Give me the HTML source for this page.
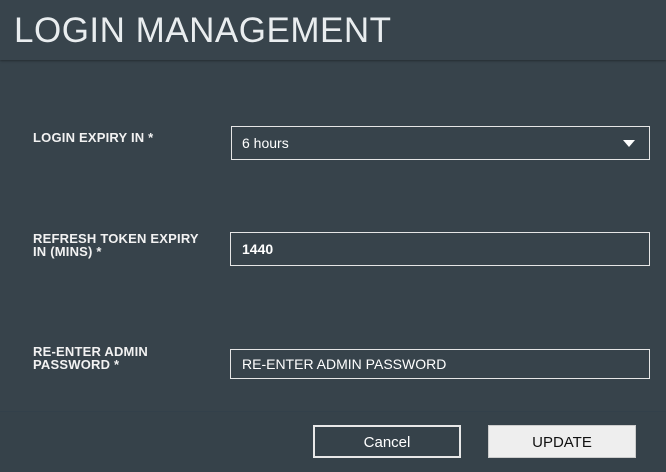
<!DOCTYPE html>
<html><head><meta charset="utf-8"><style>
*{margin:0;padding:0;box-sizing:border-box}
body{width:666px;height:472px;background:#37434b;font-family:"Liberation Sans",sans-serif;color:#fff;position:relative;overflow:hidden}
.hdr{position:absolute;left:0;top:0;width:666px;height:60px;background:#38444c;box-shadow:0 1px 2px rgba(0,0,0,.35)}
.hdr h1{position:absolute;left:14px;top:11px;font-size:35px;font-weight:normal;letter-spacing:0.5px;color:#e9edef;line-height:40px}
.lbl{position:absolute;left:33px;font-size:13px;font-weight:bold;line-height:13px;color:#f2f2f2;letter-spacing:0.2px}
.box{position:absolute;border:1px solid #e6e6e6;font-size:14px;color:#fff;padding-left:11px;display:flex;align-items:center}
.foot{position:absolute;left:0;top:411px;width:666px;height:61px;background:#36424a;border-top:1px solid #33404a}
.btn{position:absolute;top:425px;width:148px;height:33px;display:flex;align-items:center;justify-content:center;font-size:15px;line-height:33px;padding-top:1px}
</style></head><body>
<div class="hdr"><h1>LOGIN MANAGEMENT</h1></div>
<div class="lbl" style="top:131px">LOGIN EXPIRY IN *</div>
<div class="box" style="left:231px;top:126px;width:419px;height:34px;padding-left:10px">6 hours
<svg style="position:absolute;right:14px;top:13px" width="12" height="7"><path d="M0 0H12L6 7Z" fill="#fff"/></svg></div>
<div class="lbl" style="top:232px">REFRESH TOKEN EXPIRY<br>IN (MINS) *</div>
<div class="box" style="left:230px;top:232px;width:420px;height:34px;font-weight:bold">1440</div>
<div class="lbl" style="top:345px">RE-ENTER ADMIN<br>PASSWORD *</div>
<div class="box" style="left:230px;top:349px;width:420px;height:30px">RE-ENTER ADMIN PASSWORD</div>
<div class="foot"></div>
<div class="btn" style="left:313px;border:2px solid #e8e8e8;color:#fff">Cancel</div>
<div class="btn" style="left:488px;background:#eeeeee;border:1px solid #ccc;color:#111">UPDATE</div>
</body></html>
